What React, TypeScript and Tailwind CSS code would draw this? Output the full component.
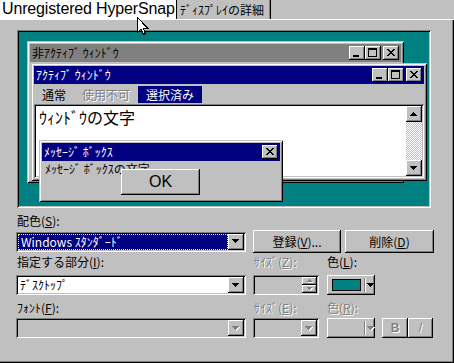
import React from "react";

// Win95 bevels
const raised = "shadow-[inset_-1px_-1px_#000,inset_1px_1px_#fff,inset_-2px_-2px_#808080]";
const sunken = "shadow-[inset_1px_1px_#808080,inset_-1px_-1px_#fff,inset_2px_2px_#000,inset_-2px_-2px_#c0c0c0]";
const frame = "shadow-[inset_1px_1px_#c0c0c0,inset_-1px_-1px_#000,inset_2px_2px_#fff,inset_-2px_-2px_#808080]";
const dim = "text-[#808080] [text-shadow:1px_1px_0_#fff]";

const Tri: React.FC<{ up?: boolean; disabled?: boolean; size?: number }> = ({ up = false, disabled = false, size = 7 }) => {
  const rows: number[] = [];
  for (let w = size; w > 0; w -= 2) rows.push(w);
  const h = rows.length;
  const draw = (dx: number, dy: number, fill: string) =>
    rows.map((w, i) => (
      <rect key={`${fill}${i}`} x={(size - w) / 2 + dx} y={(up ? h - 1 - i : i) + dy} width={w} height={1} fill={fill} />
    ));
  return (
    <svg width={size + 1} height={h + 1} shapeRendering="crispEdges" className="block">
      {disabled ? (
        <>
          {draw(1, 1, "#fff")}
          {draw(0, 0, "#808080")}
        </>
      ) : (
        draw(0, 0, "#000")
      )}
    </svg>
  );
};

const TitleButton: React.FC<{ kind: "min" | "max" | "close" }> = ({ kind }) => (
  <div className={`h-[14px] w-[16px] bg-[#c0c0c0] ${raised}`}>
    <svg width="16" height="14" shapeRendering="crispEdges" className="block">
      {kind === "min" && <rect x="4" y="9" width="6" height="2" />}
      {kind === "max" && (
        <>
          <rect x="3" y="2" width="9" height="2" />
          <rect x="3" y="2" width="1" height="9" />
          <rect x="11" y="2" width="1" height="9" />
          <rect x="3" y="10" width="9" height="1" />
        </>
      )}
      {kind === "close" && (
        <>
          <rect x="4" y="3" width="2" height="1" />
          <rect x="10" y="3" width="2" height="1" />
          <rect x="5" y="4" width="2" height="1" />
          <rect x="9" y="4" width="2" height="1" />
          <rect x="6" y="5" width="4" height="1" />
          <rect x="7" y="6" width="2" height="1" />
          <rect x="6" y="7" width="4" height="1" />
          <rect x="5" y="8" width="2" height="1" />
          <rect x="9" y="8" width="2" height="1" />
          <rect x="4" y="9" width="2" height="1" />
          <rect x="10" y="9" width="2" height="1" />
        </>
      )}
    </svg>
  </div>
);

const TitleBar: React.FC<{ title: string; active?: boolean; closeOnly?: boolean }> = ({ title, active = true, closeOnly = false }) => (
  <div className={`flex h-[18px] shrink-0 items-center pl-[2px] pr-[2px] ${active ? "bg-[#000080] text-white" : "bg-[#808080] text-black"}`}>
    <span className="flex-1 whitespace-nowrap">{title}</span>
    {!closeOnly && (
      <>
        <TitleButton kind="min" />
        <TitleButton kind="max" />
        <div className="w-[2px]" />
      </>
    )}
    <TitleButton kind="close" />
  </div>
);

const DropButton: React.FC<{ disabled?: boolean }> = ({ disabled }) => (
  <div className={`flex h-full w-[16px] shrink-0 items-center justify-center bg-[#c0c0c0] ${raised}`}>
    <Tri disabled={disabled} />
  </div>
);

const Combo: React.FC<{ width: string; disabled?: boolean; children?: React.ReactNode; focus?: boolean }> = ({
  width,
  disabled,
  children,
  focus,
}) => (
  <div className={`flex h-[20px] ${width} p-[2px] ${disabled ? "bg-[#c0c0c0]" : "bg-white"} ${sunken}`}>
    <div
      className={`flex min-w-0 flex-1 items-center whitespace-nowrap pl-[2px] ${
        focus ? "border border-dotted border-[#ffff00] bg-[#000080] pl-[1px] text-white" : ""
      }`}
    >
      {children}
    </div>
    <DropButton disabled={disabled} />
  </div>
);

const Spinner: React.FC = () => (
  <div className={`flex h-[20px] w-[66px] bg-[#c0c0c0] p-[2px] ${sunken}`}>
    <div className="flex-1" />
    <div className="flex w-[15px] flex-col">
      <div className={`flex flex-1 items-center justify-center ${raised}`}>
        <Tri up disabled size={5} />
      </div>
      <div className={`flex flex-1 items-center justify-center ${raised}`}>
        <Tri disabled size={5} />
      </div>
    </div>
  </div>
);

const ColorButton: React.FC<{ color?: string }> = ({ color }) => (
  <div className={`flex h-[20px] w-[48px] items-center bg-[#c0c0c0] pl-[5px] ${raised}`}>
    <div className={`h-[12px] w-[29px] ${color ? "border border-black" : ""}`} style={color ? { background: color } : undefined} />
    <div className="ml-[3px] h-[14px] w-[2px] border-l border-r border-l-[#808080] border-r-white" />
    <div className="ml-[1px]">
      <Tri disabled={!color} />
    </div>
  </div>
);

const Button: React.FC<{ className?: string; children: React.ReactNode }> = ({ className = "", children }) => (
  <div className={`flex h-[23px] items-center justify-center bg-[#c0c0c0] ${raised} ${className}`}>{children}</div>
);

const Scrollbar: React.FC = () => (
  <div className="flex w-[16px] flex-col">
    <div className={`flex h-[16px] items-center justify-center bg-[#c0c0c0] ${raised}`}>
      <Tri up />
    </div>
    <div className="flex-1 bg-[image:repeating-conic-gradient(#c0c0c0_0%_25%,#fff_0%_50%)] bg-[length:2px_2px]" />
    <div className={`flex h-[16px] items-center justify-center bg-[#c0c0c0] ${raised}`}>
      <Tri />
    </div>
  </div>
);

export default function App() {
  return (
    <div className="relative h-[363px] w-[454px] overflow-hidden bg-[#c0c0c0] font-['Noto_Sans_CJK_JP',sans-serif] text-[12px] leading-[14px] text-black">
      {/* tab strip */}
      <div className="flex h-[19px]">
        <div className="w-[176px] overflow-hidden whitespace-nowrap bg-white pl-[2px] font-['Liberation_Sans',sans-serif] text-[16px] leading-[18px] tracking-[-0.15px]">
          Unregistered HyperSnap
        </div>
        <div className="flex w-[95px] items-center whitespace-nowrap border-l border-black pl-[3px] shadow-[inset_-1px_0_#000,inset_-2px_0_#808080]">
          ﾃﾞｨｽﾌﾟﾚｲの詳細
        </div>
      </div>

      {/* tab page */}
      <div className="h-[344px] pl-[16px] pt-[11px] shadow-[inset_0_1px_#fff,inset_-1px_-1px_#000,inset_-2px_-2px_#808080]">
        {/* preview desktop */}
        <div className={`relative ml-[1px] h-[178px] w-[414px] bg-[#008080] ${sunken}`}>
          <div className={`absolute left-[10px] top-[11px] h-[142px] w-[377px] bg-[#c0c0c0] p-[3px] ${frame}`}>
            <TitleBar title="非ｱｸﾃｨﾌﾞ ｳｨﾝﾄﾞｳ" active={false} />
          </div>

          <div className={`absolute left-[14px] top-[33px] flex h-[118px] w-[396px] flex-col bg-[#c0c0c0] p-[3px] ${frame}`}>
            <TitleBar title="ｱｸﾃｨﾌﾞ ｳｨﾝﾄﾞｳ" />
            <div className="flex h-[20px] shrink-0 items-start pt-[2px]">
              <span className="px-[8px] leading-[17px]">通常</span>
              <span className={`px-[8px] leading-[17px] ${dim}`}>使用不可</span>
              <span className="bg-[#000080] px-[8px] leading-[17px] text-white">選択済み</span>
            </div>
            <div className={`flex flex-1 bg-white p-[2px] ${sunken}`}>
              <div className="flex-1 pl-[3px] pt-[1px] text-[16px] leading-[20px]">ｳｨﾝﾄﾞｳの文字</div>
              <Scrollbar />
            </div>
          </div>

          <div className={`absolute left-[22px] top-[110px] flex h-[62px] w-[244px] flex-col bg-[#c0c0c0] p-[3px] ${frame}`}>
            <TitleBar title="ﾒｯｾｰｼﾞ ﾎﾞｯｸｽ" closeOnly />
            <div className="pl-[3px] pt-[1px]">ﾒｯｾｰｼﾞ ﾎﾞｯｸｽの文字</div>
            <div className={`-mt-[7px] ml-[79px] flex h-[26px] w-[79px] items-center justify-center bg-[#c0c0c0] font-['Liberation_Sans',sans-serif] text-[16px] ${raised}`}>
              OK
            </div>
          </div>
        </div>

        {/* controls */}
        <div className="mt-[6px] h-[14px] pl-[1px]">
          配色(<u>S</u>):
        </div>
        <div className="mt-[3px] flex h-[21px] items-center">
          <Combo width="w-[230px]" focus>
            Windows ｽﾀﾝﾀﾞｰﾄﾞ
          </Combo>
          <Button className="ml-[7px] w-[88px]">
            登録(<u>V</u>)...
          </Button>
          <Button className="ml-[4px] w-[89px]">
            削除(<u>D</u>)
          </Button>
        </div>

        <div className="mt-[3px] flex h-[14px]">
          <span className="w-[238px] pl-[1px]">
            指定する部分(<u>I</u>):
          </span>
          <span className={`w-[73px] ${dim}`}>
            ｻｲｽﾞ(<u>Z</u>):
          </span>
          <span>
            色(<u>L</u>):
          </span>
        </div>
        <div className="mt-[6px] flex">
          <Combo width="w-[230px]">ﾃﾞｽｸﾄｯﾌﾟ</Combo>
          <div className="ml-[7px]">
            <Spinner />
          </div>
          <div className="ml-[8px]">
            <ColorButton color="#008080" />
          </div>
        </div>

        <div className="mt-[6px] flex h-[14px]">
          <span className="w-[238px] pl-[1px]">
            ﾌｫﾝﾄ(<u>F</u>):
          </span>
          <span className={`w-[73px] ${dim}`}>
            ｻｲｽﾞ(<u>E</u>):
          </span>
          <span className={dim}>
            色(<u>R</u>):
          </span>
        </div>
        <div className="mt-[3px] flex">
          <Combo width="w-[230px]" disabled />
          <div className="ml-[7px]">
            <Combo width="w-[66px]" disabled />
          </div>
          <div className="ml-[8px]">
            <ColorButton />
          </div>
          <div className={`ml-[7px] flex h-[20px] w-[26px] items-center justify-center bg-[#c0c0c0] font-['Liberation_Sans',sans-serif] font-bold ${raised} ${dim}`}>
            B
          </div>
          <div className={`flex h-[20px] w-[25px] items-center justify-center bg-[#c0c0c0] font-['Liberation_Sans',sans-serif] ${raised} ${dim}`}>
            /
          </div>
        </div>
      </div>

      {/* mouse pointer */}
      <svg width="13" height="20" className="absolute left-[137px] top-[17px]" shapeRendering="crispEdges">
        <path d="M0.5 0.5 V15.5 L4 12 L6.5 17.5 L8.5 16.5 L6 11 H10.5 Z" fill="#fff" stroke="#000" strokeWidth="1" />
      </svg>
    </div>
  );
}
